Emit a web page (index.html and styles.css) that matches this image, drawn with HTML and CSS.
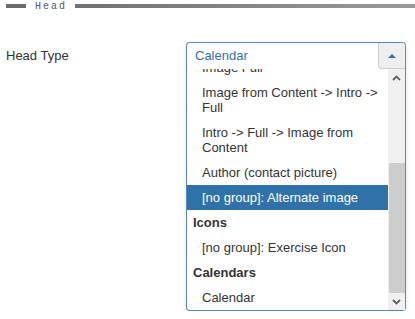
FILE: index.html
```html
<!DOCTYPE html>
<html lang="en">
<head>
    <meta charset="UTF-8">
    <title>Head Type</title>
    <link rel="stylesheet" href="styles.css">
</head>
<body>
    <!-- Section spacer -->
    <div class="spacer">
        <span class="bar bar-left"></span>
        <span class="spacer-title">Head</span>
        <span class="bar bar-right"></span>
    </div>

    <!-- Field row -->
    <div class="field">
        <label class="field-label">Head Type</label>
        <div class="chzn">
            <div class="chzn-single">
                <span class="chzn-value">Calendar</span>
                <div class="chzn-arrow"><span class="tri"></span></div>
            </div>
            <div class="chzn-drop">
                <div class="chzn-results">
                    <ul class="results-list">
                        <li class="opt">Image Full</li>
                        <li class="opt">Image from Content -&gt; Intro -&gt; Full</li>
                        <li class="opt">Intro -&gt; Full -&gt; Image from Content</li>
                        <li class="opt">Author (contact picture)</li>
                        <li class="opt active">[no group]: Alternate image</li>
                        <li class="group">Icons</li>
                        <li class="opt">[no group]: Exercise Icon</li>
                        <li class="group">Calendars</li>
                        <li class="opt">Calendar</li>
                    </ul>
                </div>
                <div class="scrollbar">
                    <div class="sb-btn">
                        <svg width="9" height="6" viewBox="0 0 9 6"><path d="M1 5 L4.5 1.5 L8 5" fill="none" stroke="#606060" stroke-width="1.8"/></svg>
                    </div>
                    <div class="sb-track">
                        <div class="sb-thumb"></div>
                    </div>
                    <div class="sb-btn">
                        <svg width="9" height="6" viewBox="0 0 9 6"><path d="M1 1 L4.5 4.5 L8 1" fill="none" stroke="#606060" stroke-width="1.8"/></svg>
                    </div>
                </div>
            </div>
        </div>
    </div>
</body>
</html>
```

FILE: styles.css
```css
body {
    margin: 0;
    padding: 0;
    background-color: #fff;
    font-family: Arial, "Liberation Sans", sans-serif;
    font-size: 13px;
    color: #333;
}

.spacer {
    display: flex;
    align-items: center;
    height: 12px;
    padding-left: 6px;
}

.bar {
    display: block;
    height: 4px;
}

.bar-left {
    width: 20px;
    background-color: #6a6a6a;
}

.bar-right {
    flex: 1;
    background: linear-gradient(to right, #717171, #9a9a9a);
}

.spacer-title {
    font-family: "Liberation Mono", monospace;
    font-size: 10px;
    letter-spacing: 2px;
    color: #555;
    padding: 0 8px 0 9px;
}

.field {
    display: flex;
    margin-top: 30px;
    padding-left: 6px;
}

.field-label {
    width: 180px;
    line-height: 28px;
    color: #333;
}

.chzn {
    width: 220px;
    box-shadow: 0 3px 5px rgba(0, 0, 0, 0.12);
    border-radius: 4px;
}

.chzn-single {
    display: flex;
    height: 26px;
    border: 1px solid #5a88b8;
    border-bottom: none;
    border-radius: 4px 4px 0 0;
    color: #3071a9;
}

.chzn-value {
    flex: 1;
    padding-left: 8px;
    line-height: 26px;
}

.chzn-arrow {
    box-sizing: border-box;
    display: flex;
    align-items: center;
    justify-content: center;
    width: 27px;
    height: 26px;
    background-color: #eee;
    border-left: 1px solid #ccc;
    border-bottom: 1px solid #ccc;
    border-radius: 0 3px 0 4px;
}

.tri {
    width: 0;
    height: 0;
    border-left: 4px solid transparent;
    border-right: 4px solid transparent;
    border-bottom: 4px solid #3071a9;
}

.chzn-drop {
    display: flex;
    height: 241px;
    border: 1px solid #5a88b8;
    border-top: none;
    border-radius: 0 0 4px 4px;
    background-color: #fff;
}

.chzn-results {
    flex: 1;
    overflow: hidden;
}

.results-list {
    list-style: none;
    margin: -14px 0 0 0;
    padding: 0;
}

.results-list li {
    padding: 5px 6px;
    line-height: 15px;
}

.results-list .opt {
    padding-left: 15px;
}

.results-list .group {
    font-weight: bold;
}

.results-list .active {
    background-color: #3071a9;
    color: #fff;
}

.scrollbar {
    display: flex;
    flex-direction: column;
    width: 17px;
    background-color: #f0f0f0;
}

.sb-btn {
    display: flex;
    align-items: center;
    justify-content: center;
    height: 17px;
}

.sb-track {
    flex: 1;
    padding-top: 77px;
}

.sb-thumb {
    height: 130px;
    margin-left: 1px;
    background-color: #cdcdcd;
}
```
